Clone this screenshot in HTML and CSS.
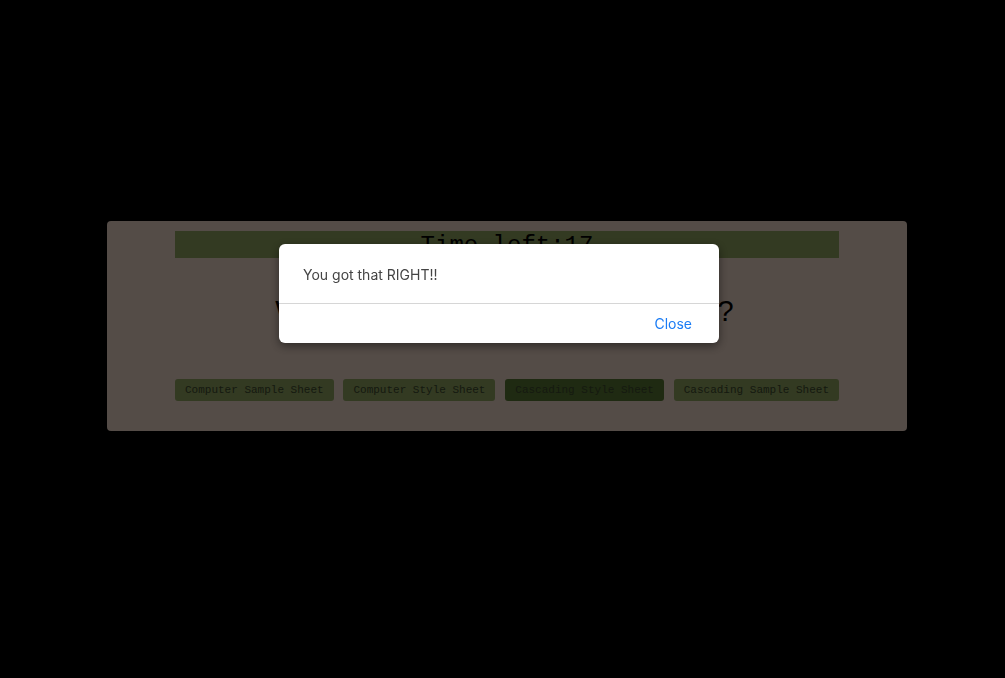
FILE: index.html
```html
<!DOCTYPE html>
<html>
<head>
<meta charset="utf-8">
<link rel="stylesheet" href="styles.css">
</head>
<body>
<div class="page">
  <div class="card">
    <div class="timer">Time left:17</div>
    <div class="question">What does CSS stand for?</div>
    <div class="answers">
      <button class="answer">Computer Sample Sheet</button>
      <button class="answer">Computer Style Sheet</button>
      <button class="answer selected">Cascading Style Sheet</button>
      <button class="answer">Cascading Sample Sheet</button>
    </div>
  </div>
</div>
<div class="backdrop"></div>
<div class="modal">
  <div class="modal-body">You got that RIGHT!!</div>
  <div class="modal-footer"><span class="close">Close</span></div>
</div>
</body>
</html>
```
FILE: styles.css
```css
html, body {
  margin: 0;
  padding: 0;
  background: #000;
  height: 100%;
  overflow: hidden;
}
.page {
  padding: 221px 0 0 107px;
}
.card {
  width: 800px;
  height: 210px;
  box-sizing: border-box;
  padding: 10px 68px 0 68px;
  background: #a8988e;
  border-radius: 4px;
}
.timer {
  height: 27px;
  background: #667444;
  font-family: "Liberation Mono", monospace;
  font-size: 24px;
  line-height: 30px;
  text-align: center;
  color: #000;
  overflow: hidden;
}
.question {
  margin-top: 36px;
  font-family: "Liberation Sans", Arial, sans-serif;
  font-size: 29px;
  line-height: 34px;
  text-align: center;
  color: #000;
  letter-spacing: 5px;
}
.answers {
  margin-top: 51px;
  display: flex;
  justify-content: space-between;
}
.answer {
  height: 22px;
  padding: 0 10px;
  border: none;
  border-radius: 3px;
  background: #667444;
  font-family: "Liberation Mono", monospace;
  font-size: 11px;
  color: #2a3320;
}
.answer.selected {
  background: #3e5424;
}
.backdrop {
  position: fixed;
  inset: 0;
  background: rgba(0, 0, 0, 0.5);
}
.modal {
  position: fixed;
  left: 279px;
  top: 244px;
  width: 440px;
  background: #fff;
  border-radius: 6px;
  box-shadow: 0 3px 10px rgba(0, 0, 0, 0.45);
  font-family: Inter, "Noto Sans", sans-serif;
}
.modal-body {
  height: 60px;
  box-sizing: border-box;
  padding: 22px 24px 0 24px;
  font-size: 14px;
  color: #444;
  border-bottom: 1px solid #d6d6d6;
}
.modal-footer {
  height: 39px;
  display: flex;
  align-items: center;
  justify-content: flex-end;
  padding-right: 27px;
}
.close {
  font-size: 14px;
  color: #1a7cf5;
}
```
